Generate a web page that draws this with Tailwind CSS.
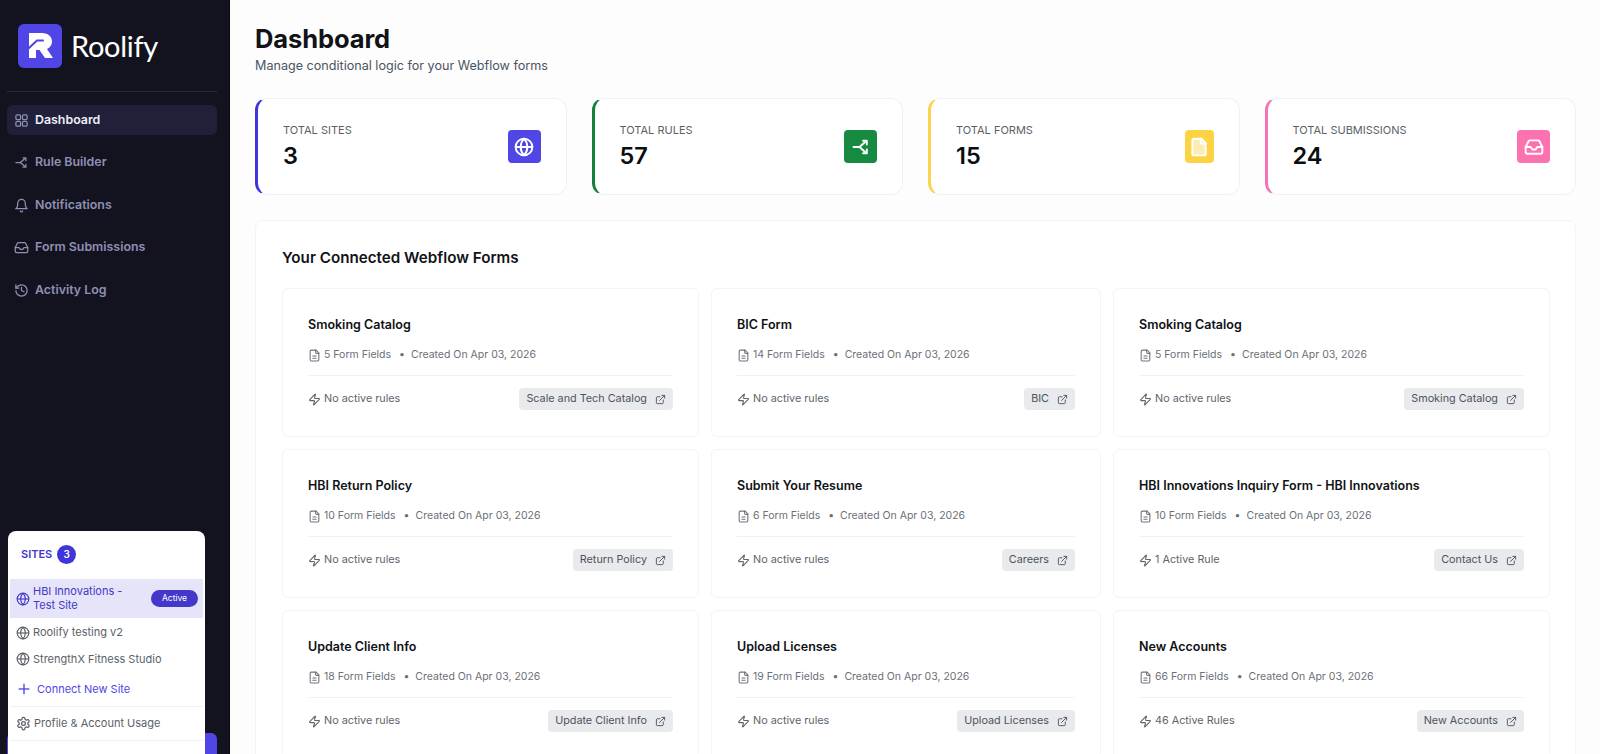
<!DOCTYPE html>
<html lang="en">
<head>
  <meta charset="UTF-8" />
  <meta name="viewport" content="width=device-width, initial-scale=1.0" />
  <title>Roolify</title>
  <script src="https://cdn.jsdelivr.net/npm/@tailwindcss/browser@4"></script>
</head>
<body class="h-screen overflow-hidden bg-[#fdfdfe] text-[#111318] flex font-['Inter',sans-serif]">

  <!-- Sidebar -->
  <aside class="relative w-[230px] shrink-0 h-full bg-[#13131f] border-r border-[#0b0b12] flex flex-col pl-[7px] pr-[12px]">
    <div class="flex items-center gap-[9px] pl-[11px] pt-[24px] pb-[23px] border-b border-[#2a2a3a]">
      <svg class="w-[44px] h-[44px]" viewBox="0 0 44 44">
        <rect width="44" height="44" rx="6" fill="#4f46e5" />
        <path d="M11 9h13c6 0 10 3.500 10 8.500 0 3.500-2 6.200-5 7.500l6 9h-8l-5.500-8H18v8h-7z" fill="#fff" />
        <path d="M11 24l8-7.500h6" fill="none" stroke="#4f46e5" stroke-width="2" stroke-linecap="round" />
      </svg>
      <span class="text-[29px] leading-[40px] text-white font-['Lato',sans-serif] tracking-[-0.3px]">Roolify</span>
    </div>

    <nav id="nav" class="mt-[13px] flex flex-col gap-[12.500px]"></nav>

    <div class="mt-auto h-[21px] bg-[#4f46e5] rounded-t-md"></div>

    <!-- Sites menu, opened over the sidebar -->
    <div class="absolute left-[8px] top-[531px] w-[197px] h-[240px] bg-white rounded-lg">
      <div class="flex items-center gap-[5px] pl-[13px] pt-[14px] pb-[15px]">
        <span class="text-[11px] font-semibold text-[#4338ca]">SITES</span>
        <span class="w-[19px] h-[19px] rounded-full bg-[#3f35d8] text-white text-[10px] font-semibold flex items-center justify-center">3</span>
      </div>
      <div class="mx-[2px] h-[39px] bg-[#e6e4f8] flex items-center pl-[6px] pr-[5px] gap-[3px] text-[#4338ca]">
        <svg class="w-[14px] h-[14px] shrink-0" viewBox="0 0 24 24" fill="none" stroke="currentColor" stroke-width="2"><circle cx="12" cy="12" r="10" /><path d="M12 2a14.500 14.500 0 0 0 0 20 14.500 14.500 0 0 0 0-20" /><path d="M2 12h20" /></svg>
        <span class="text-[11px] leading-[13.500px] w-[96px]">HBI Innovations - Test Site</span>
        <span class="ml-auto w-[47px] h-[17px] rounded-full bg-[#4338ca] text-white text-[8.500px] flex items-center justify-center">Active</span>
      </div>
      <div class="mt-[6px] flex flex-col gap-[9.500px] pl-[8px] text-[11px] leading-[17px] text-[#5b5f67]">
        <div class="flex items-center gap-[3px]">
          <svg class="w-[14px] h-[14px]" viewBox="0 0 24 24" fill="none" stroke="currentColor" stroke-width="2"><circle cx="12" cy="12" r="10" /><path d="M12 2a14.500 14.500 0 0 0 0 20 14.500 14.500 0 0 0 0-20" /><path d="M2 12h20" /></svg>
          Roolify testing v2
        </div>
        <div class="flex items-center gap-[3px]">
          <svg class="w-[14px] h-[14px]" viewBox="0 0 24 24" fill="none" stroke="currentColor" stroke-width="2"><circle cx="12" cy="12" r="10" /><path d="M12 2a14.500 14.500 0 0 0 0 20 14.500 14.500 0 0 0 0-20" /><path d="M2 12h20" /></svg>
          StrengthX Fitness Studio
        </div>
      </div>
      <div class="mt-[13px] flex items-center gap-[5px] pl-[6px] pb-[8px] text-[11px] leading-[17px] text-[#4f46e5] border-b border-[#f0f0f3] mx-[2px]">
        <svg class="w-[16px] h-[16px]" viewBox="0 0 24 24" fill="none" stroke="currentColor" stroke-width="2"><path d="M4 12h16" /><path d="M12 4v16" /></svg>
        Connect New Site
      </div>
      <div class="flex items-center gap-[3px] pl-[6px] py-[8px] mx-[2px] text-[11px] leading-[17px] text-[#5b5f67] border-b border-[#f0f0f3]">
        <svg class="w-[15px] h-[15px]" viewBox="0 0 24 24" fill="none" stroke="currentColor" stroke-width="2"><path d="M12.220 2h-.44a2 2 0 0 0-2 2v.18a2 2 0 0 1-1 1.730l-.43.25a2 2 0 0 1-2 0l-.15-.08a2 2 0 0 0-2.730.73l-.22.38a2 2 0 0 0 .73 2.730l.15.1a2 2 0 0 1 1 1.720v.51a2 2 0 0 1-1 1.740l-.15.09a2 2 0 0 0-.73 2.730l.22.38a2 2 0 0 0 2.730.73l.15-.08a2 2 0 0 1 2 0l.43.25a2 2 0 0 1 1 1.730V20a2 2 0 0 0 2 2h.44a2 2 0 0 0 2-2v-.18a2 2 0 0 1 1-1.730l.43-.25a2 2 0 0 1 2 0l.15.08a2 2 0 0 0 2.730-.73l.22-.39a2 2 0 0 0-.73-2.730l-.15-.08a2 2 0 0 1-1-1.740v-.5a2 2 0 0 1 1-1.740l.15-.09a2 2 0 0 0 .73-2.730l-.22-.38a2 2 0 0 0-2.730-.73l-.15.08a2 2 0 0 1-2 0l-.43-.25a2 2 0 0 1-1-1.730V4a2 2 0 0 0-2-2z" /><circle cx="12" cy="12" r="3" /></svg>
        Profile &amp; Account Usage
      </div>
    </div>
  </aside>

  <!-- Main -->
  <main class="flex-1 min-w-0 pl-[25px] pr-[24px] pt-[24px]">
    <h1 class="text-[25.500px] leading-[30px] font-bold tracking-[-0.1px]">Dashboard</h1>
    <p class="mt-[2px] text-[12.600px] leading-[20px] text-[#4b5563]">Manage conditional logic for your Webflow forms</p>

    <div id="stats" class="mt-[22px] grid grid-cols-4 gap-[25px]"></div>

    <section class="mt-[25px] bg-white border border-[#f3f4f6] rounded-t-lg pl-[26px] pr-[25px] pt-[26px] h-[560px]">
      <h2 class="text-[15.200px] leading-[22px] font-semibold">Your Connected Webflow Forms</h2>
      <div id="forms" class="mt-[19px] grid grid-cols-[417px_390px_437px] gap-x-[12px] gap-y-[12px]"></div>
    </section>
  </main>

  <script>
    const icons = {
      grid: '<rect x="3" y="3" width="7.500" height="7.500" rx="2" /><rect x="13.500" y="3" width="7.500" height="7.500" rx="2" /><rect x="3" y="13.500" width="7.500" height="7.500" rx="2" /><rect x="13.500" y="13.500" width="7.500" height="7.500" rx="2" />',
      rules: '<path d="M3 12h6c1.500 0 2.500-.8 3.500-2L17 6" /><path d="M9 12c1.500 0 2.500.8 3.500 2l4.500 4" /><path d="M14.500 4.500H19V9" /><path d="M14.500 19.500H19V15" />',
      bell: '<path d="M10.300 21a1.940 1.940 0 0 0 3.400 0" /><path d="M6 8a6 6 0 0 1 12 0c0 7 3 9 3 9H3s3-2 3-9" />',
      inbox: '<polyline points="22 12 16 12 14 15 10 15 8 12 2 12" /><path d="M5.450 5.110 2 12v6a2 2 0 0 0 2 2h16a2 2 0 0 0 2-2v-6l-3.450-6.890A2 2 0 0 0 16.760 4H7.240a2 2 0 0 0-1.790 1.110z" />',
      history: '<path d="M3 12a9 9 0 1 0 9-9 9.750 9.750 0 0 0-6.740 2.740L3 8" /><path d="M3 3v5h5" /><path d="M12 7v5l4 2" />',
      globe: '<circle cx="12" cy="12" r="10" /><path d="M12 2a14.500 14.500 0 0 0 0 20 14.500 14.500 0 0 0 0-20" /><path d="M2 12h20" />',
      file: '<path d="M15 2H6a2 2 0 0 0-2 2v16a2 2 0 0 0 2 2h12a2 2 0 0 0 2-2V7Z" fill="#fff" fill-opacity=".6" /><path d="M14 2v4a2 2 0 0 0 2 2h4" />',
      fileText: '<path d="M15 2H6a2 2 0 0 0-2 2v16a2 2 0 0 0 2 2h12a2 2 0 0 0 2-2V7Z" /><path d="M14 2v4a2 2 0 0 0 2 2h4" /><path d="M9 13h6" /><path d="M9 17h6" />',
      zap: '<path d="M4 14a1 1 0 0 1-.78-1.630l9.900-10.200a.5.5 0 0 1 .86.46l-1.920 6.020A1 1 0 0 0 13 10h7a1 1 0 0 1 .78 1.630l-9.900 10.200a.5.5 0 0 1-.86-.46l1.920-6.020A1 1 0 0 0 11 14z" />',
      link: '<path d="M15 3h6v6" /><path d="M10 14 21 3" /><path d="M18 13v6a2 2 0 0 1-2 2H5a2 2 0 0 1-2-2V8a2 2 0 0 1 2-2h6" />'
    };

    function svg(name, cls, width) {
      return `<svg class="${cls}" viewBox="0 0 24 24" fill="none" stroke="currentColor" stroke-width="${width || 2}" stroke-linecap="round" stroke-linejoin="round">${icons[name]}</svg>`;
    }

    const navItems = [
      ['grid', 'Dashboard', true],
      ['rules', 'Rule Builder'],
      ['bell', 'Notifications'],
      ['inbox', 'Form Submissions'],
      ['history', 'Activity Log']
    ];
    document.getElementById('nav').innerHTML = navItems.map(([icon, label, active]) => `
      <div class="h-[30px] flex items-center gap-[6px] pl-[7px] rounded-md text-[12.400px] font-semibold ${active ? 'bg-[#20203a] text-[#eeeef6]' : 'text-[#8f8fb4]'}">
        ${svg(icon, 'w-[15px] h-[15px] ' + (active ? 'text-[#8f8fb4]' : ''))}${label}
      </div>`).join('');

    const stats = [
      ['TOTAL SITES', '3', 'border-l-[#3f35e0]', 'globe', 'w-[33px] bg-[#4f46e5]'],
      ['TOTAL RULES', '57', 'border-l-[#15803d]', 'rules', 'w-[33px] bg-[#178a42]'],
      ['TOTAL FORMS', '15', 'border-l-[#fcd34d]', 'file', 'w-[29px] bg-[#fdd243]'],
      ['TOTAL SUBMISSIONS', '24', 'border-l-[#f472b6]', 'inbox', 'w-[33px] bg-[#fb72ae]']
    ];
    document.getElementById('stats').innerHTML = stats.map(([label, value, border, icon, box]) => `
      <div class="h-[97px] bg-white border border-[#f0f1f4] border-l-[3px] ${border} rounded-xl flex items-center justify-between pl-[25px] pr-[25px]">
        <div>
          <div class="text-[11px] leading-[14px] text-[#5b5f67]">${label}</div>
          <div class="mt-[5px] text-[23.500px] leading-[28px] font-semibold text-[#0c0d11]">${value}</div>
        </div>
        <div class="${box} h-[33px] rounded flex items-center justify-center text-white">${svg(icon, 'w-[20px] h-[20px]', 2.300)}</div>
      </div>`).join('');

    const forms = [
      ['Smoking Catalog', '5', 'No active rules', 'Scale and Tech Catalog'],
      ['BIC Form', '14', 'No active rules', 'BIC'],
      ['Smoking Catalog', '5', 'No active rules', 'Smoking Catalog'],
      ['HBI Return Policy', '10', 'No active rules', 'Return Policy'],
      ['Submit Your Resume', '6', 'No active rules', 'Careers'],
      ['HBI Innovations Inquiry Form - HBI Innovations', '10', '1 Active Rule', 'Contact Us'],
      ['Update Client Info', '18', 'No active rules', 'Update Client Info'],
      ['Upload Licenses', '19', 'No active rules', 'Upload Licenses'],
      ['New Accounts', '66', '46 Active Rules', 'New Accounts']
    ];
    document.getElementById('forms').innerHTML = forms.map(([title, fields, rules, page]) => `
      <div class="h-[149px] bg-white border border-[#f3f4f6] rounded-md px-[25px] pt-[27px]">
        <div class="text-[12.500px] leading-[18px] font-semibold text-[#101216]">${title}</div>
        <div class="mt-[13px] pb-[12px] border-b border-[#f0f1f3] flex items-center text-[10.500px] leading-[16px] text-[#6b7078]">
          ${svg('fileText', 'w-[13px] h-[13px] mr-[3px] text-[#70747c]')}${fields} Form Fields
          <span class="ml-[8px] mr-[6px]">•</span>Created On Apr 03, 2026
        </div>
        <div class="mt-[12px] flex items-center justify-between text-[10.800px] text-[#5f636b]">
          <span class="flex items-center gap-[3px] pt-px">${svg('zap', 'w-[13px] h-[13px]')}${rules}</span>
          <span class="h-[22px] pl-[7px] pr-[7px] pt-px rounded bg-[#e9eaed] text-[#4e525a] flex items-center gap-[8px]">${page}${svg('link', 'w-[11px] h-[11px]')}</span>
        </div>
      </div>`).join('');
  </script>
</body>
</html>
